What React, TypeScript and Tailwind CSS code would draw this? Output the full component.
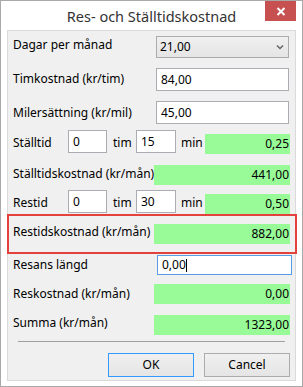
import React from 'react'

// --- small building blocks ---
const Label = ({ children, className = '' }: { children: React.ReactNode; className?: string }) => (
  <span className={`leading-none whitespace-nowrap ${className}`}>{children}</span>
)

const TextBox = ({ value, className = '' }: { value: string; className?: string }) => (
  <div className={`bg-white border border-[#abadb3] flex items-center pl-[4px] leading-none ${className}`}>{value}</div>
)

const Green = ({ value, className = '' }: { value: string; className?: string }) => (
  <div className={`bg-[#98fb98] h-[20px] flex items-center justify-end pr-[1px] leading-none ${className}`}>{value}</div>
)

const Btn = ({ text, focused }: { text: string; focused?: boolean }) => (
  <div className={`w-[86px] h-[24px] flex items-center justify-center border bg-gradient-to-b from-[#f0f0f0] to-[#e5e5e5] leading-none
    ${focused ? 'border-[#3399ff]' : 'border-[#acacac]'}`}>{text}</div>
)

// time row: label, hours, "tim", minutes, "min", result
const TimeRow = ({ label, h, m, result, mt }: { label: string; h: string; m: string; result: string; mt: string }) => (
  <div className={`flex items-start h-[24px] pl-[5px] pr-[5px] ${mt}`}>
    <Label className="w-[55px] mt-[7px]">{label}</Label>
    <TextBox value={h} className="w-[39px] h-[23px]" />
    <Label className="ml-[6px] w-[23px] mt-[7px]">tim</Label>
    <TextBox value={m} className="w-[40px] h-[23px]" />
    <Label className="ml-[5px] w-[24px] mt-[7px]">min</Label>
    <Green value={result} className="flex-1 mt-[4px]" />
  </div>
)

export default function App() {
  return (
    <div className="w-[303px] h-[387px] bg-white border border-[#a9a9a9] flex flex-col font-['Noto_Sans',sans-serif] text-[12px] text-black">
      {/* title bar */}
      <div className="relative h-[29px] flex items-center justify-center">
        <span className="text-[14.5px] text-[#333] leading-none mt-[1px]">Res- och Ställtidskostnad</span>
        <div className="absolute top-0 right-[6px] w-[31px] h-[20px] bg-[#c75050] flex items-center justify-center">
          <svg width="10" height="9" viewBox="0 0 10 9">
            <path d="M1.5 1 L8.5 8 M8.5 1 L1.5 8" stroke="white" strokeWidth="2" />
          </svg>
        </div>
      </div>

      {/* form panel */}
      <div className="mx-[6px] h-[351px] border border-[#dadada] bg-[#f0f0f0] flex flex-col">
        <div className="flex items-center h-[22px] mt-[5px] pl-[5px] pr-[6px]">
          <Label className="w-[143px] mb-[5px]">Dagar per månad</Label>
          <div className="flex-1 h-[22px] border border-[#acacac] bg-gradient-to-b from-[#f0f0f0] to-[#e5e5e5] flex items-center pl-[3px] pr-[4px] leading-none">
            <span className="flex-1">21,00</span>
            <svg width="8" height="6" viewBox="0 0 8 6">
              <path d="M1 1.5 L4 4.5 L7 1.5" stroke="#666" strokeWidth="1.5" fill="none" />
            </svg>
          </div>
        </div>

        <div className="flex items-center h-[23px] mt-[10px] pl-[5px] pr-[6px]">
          <Label className="w-[143px] mb-[2px]">Timkostnad (kr/tim)</Label>
          <TextBox value="84,00" className="flex-1 h-[23px]" />
        </div>

        <div className="flex items-center h-[23px] mt-[10px] pl-[5px] pr-[6px]">
          <Label className="w-[143px]">Milersättning (kr/mil)</Label>
          <TextBox value="45,00" className="flex-1 h-[23px]" />
        </div>

        <TimeRow label="Ställtid" h="0" m="15" result="0,25" mt="mt-[6px]" />

        <div className="flex items-center h-[20px] mt-[11px] pl-[5px] pr-[5px]">
          <Label className="w-[141px] mb-[2px]">Ställtidskostnad (kr/mån)</Label>
          <Green value="441,00" className="flex-1" />
        </div>

        <TimeRow label="Restid" h="0" m="30" result="0,50" mt="mt-[5px]" />

        {/* highlighted row */}
        <div className="h-[40px] -ml-[1px] -mr-[2px] border-2 border-[#e3413b] flex items-center pl-[4px] pr-[5px]">
          <Label className="w-[141px] mb-[4px]">Restidskostnad (kr/mån)</Label>
          <Green value="882,00" className="flex-1" />
        </div>

        <div className="flex items-center h-[20px] mt-[1px] pl-[5px] pr-[3px]">
          <Label className="w-[144px] mb-[1px]">Resans längd</Label>
          <div className="flex-1 h-[20px] bg-white border border-[#569de5] flex items-center pl-[4px] leading-none">
            0,00<span className="w-[1px] h-[13px] bg-black" />
          </div>
        </div>

        <div className="flex items-center h-[20px] mt-[9px] pl-[5px] pr-[5px]">
          <Label className="w-[141px]">Reskostnad (kr/mån)</Label>
          <Green value="0,00" className="flex-1" />
        </div>

        <div className="flex items-center h-[20px] mt-[11px] pl-[5px] pr-[5px]">
          <Label className="w-[141px] mb-[4px]">Summa (kr/mån)</Label>
          <Green value="1323,00" className="flex-1" />
        </div>

        <div className="mx-[10px] mt-[6px] h-[1px] bg-[#a0a0a0]" />

        <div className="flex justify-end gap-[10px] mt-[11px] pr-[5px]">
          <Btn text="OK" focused />
          <Btn text="Cancel" />
        </div>
      </div>
    </div>
  )
}
